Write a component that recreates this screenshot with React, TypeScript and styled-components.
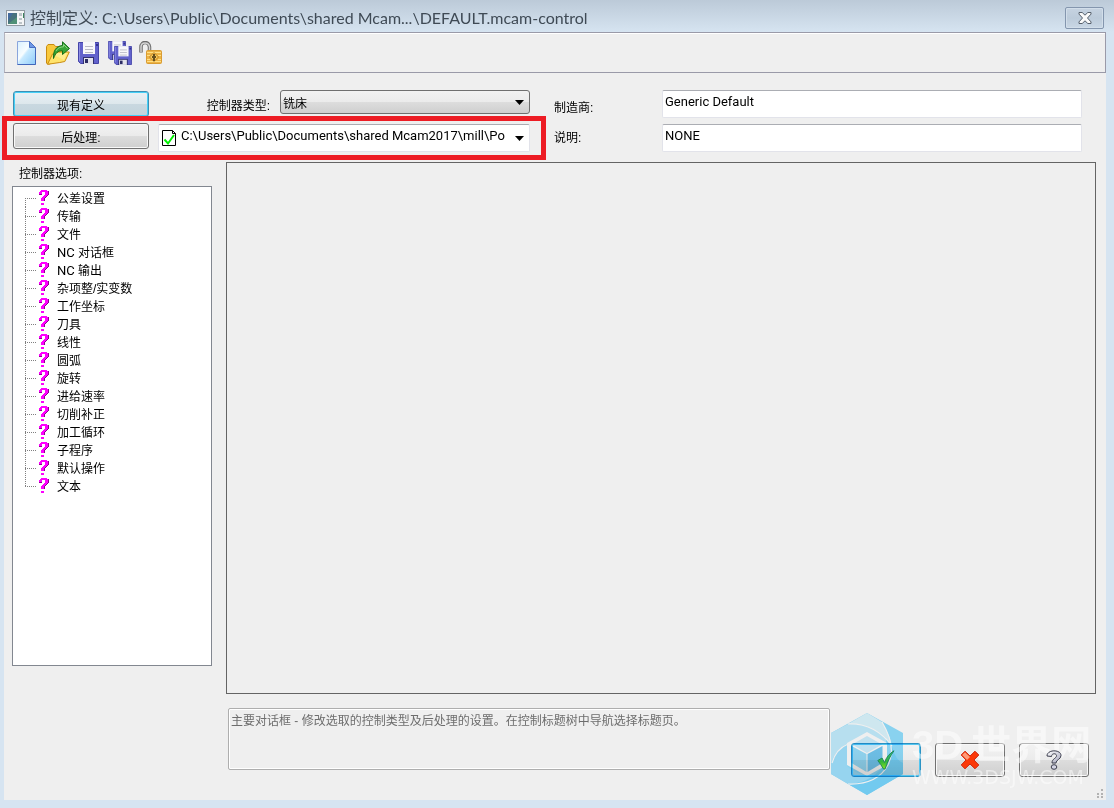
import React from 'react';
import styled, { createGlobalStyle } from 'styled-components';

const GlobalStyle = createGlobalStyle`
  * { box-sizing: border-box; }
  body {
    margin: 0;
    background: #d6e4f1;
    color: #000;
    font: 12px/18px "Liberation Sans", "Noto Sans CJK SC", sans-serif;
  }
  button, input, select, textarea { font: inherit; color: inherit; margin: 0; }
`;

const Window = styled.div`
  display: flex;
  flex-direction: column;
  min-height: 100vh;
  padding: 0 8px 8px 4px;
  background: linear-gradient(#bccad8, #d6e4f1 32px);
`;

const TitleBar = styled.header`
  display: flex;
  align-items: center;
  gap: 5px;
  height: 32px;
  padding: 4px 2px 0;
`;

const Title = styled.h1`
  flex: 1;
  margin: 0;
  font: 400 16px/24px Lato, "Noto Sans CJK SC", sans-serif;
  color: #3f4a55;
  white-space: nowrap;
`;

const CloseButton = styled.button`
  display: grid;
  place-items: center;
  width: 39px;
  height: 22px;
  padding: 0;
  border: 1px solid #8496ae;
  border-radius: 2px;
  background: linear-gradient(#c6d3e1, #bccbda 50%, #c9d7e5);
  box-shadow: inset 0 0 0 1px #d2deea;
`;

const Client = styled.main`
  position: relative;
  flex: 1;
  background: #efefef;
`;

const Toolbar = styled.div`
  display: flex;
  align-items: center;
  gap: 7px;
  height: 41px;
  padding: 0 10px;
  border: 1px solid #9a9aa8;
  border-left-color: #b4b4be;
  box-shadow: inset 0 1px #fff;
`;

const ToolButton = styled.button`
  width: 24px;
  height: 24px;
  padding: 0;
  border: 0;
  background: none;
  svg { display: block; }
`;

const Definition = styled.section`
  position: relative;
  display: flex;
  padding: 17px 24px 9px 9px;
`;

const ButtonColumn = styled.div`
  display: flex;
  flex-direction: column;
  gap: 6px;
  width: 136px;
  padding-top: 1px;
  margin-right: 9px;
`;

const PushButton = styled.button<{ $active?: boolean }>`
  display: grid;
  place-items: center;
  height: 26px;
  padding: 4px 0 0;
  border: 1px solid ${(p) => (p.$active ? '#3c8fb4' : '#707070')};
  border-radius: 3px;
  background: ${(p) =>
    p.$active
      ? 'linear-gradient(#e9f0f4, #dde7ec 50%, #c9d8e0 50%, #c3d3dc)'
      : 'linear-gradient(#f2f2f2, #ebebeb 50%, #dddddd 50%, #cfcfcf)'};
  box-shadow: inset 0 0 0 1px ${(p) => (p.$active ? '#46d0f7' : '#f8f8f8')};
`;

const FieldColumn = styled.div`
  display: flex;
  flex-direction: column;
  gap: 6px;
  width: 372px;
  margin-right: 24px;
`;

const FieldRow = styled.div`
  display: flex;
  gap: 10px;
  justify-content: flex-end;
  height: 28px;
  line-height: 32px;
`;

const TypeSelect = styled.select`
  appearance: none;
  width: 250px;
  height: 24px;
  padding: 4px 24px 0 2px;
  border: 1px solid #707070;
  border-radius: 3px;
  background: linear-gradient(#f2f2f2, #ebebeb 50%, #dddddd 50%, #cfcfcf);
`;

const SelectBox = styled.div<{ $wide?: boolean }>`
  position: relative;
  width: ${(p) => (p.$wide ? '100%' : '250px')};
  line-height: 18px;
`;

const ArrowMark = styled.svg<{ $low?: boolean }>`
  position: absolute;
  right: 6px;
  top: ${(p) => (p.$low ? '12px' : '10px')};
  pointer-events: none;
`;

const PageMark = styled.svg`
  position: absolute;
  left: 4px;
  top: 6px;
  pointer-events: none;
`;

const PostSelect = styled.select`
  appearance: none;
  width: 100%;
  height: 28px;
  padding: 0 24px 4px 22px;
  border: 1px solid #e2e3ea;
  border-top-color: #abadb3;
  border-radius: 2px;
  background: #fff;
  font-family: Roboto, "Noto Sans CJK SC", sans-serif;
  font-size: 13px;
`;

const LabelColumn = styled.div`
  display: flex;
  flex-direction: column;
  width: 108px;
  padding-top: 3px;
  line-height: 30px;
`;

const InputColumn = styled.div`
  display: flex;
  flex: 1;
  flex-direction: column;
  gap: 6px;
`;

const TextInput = styled.input`
  width: 100%;
  height: 28px;
  padding: 0 2px 5px;
  border: 1px solid #e2e3ea;
  border-top-color: #abadb3;
  border-radius: 2px;
  background: #fff;
  font-family: Roboto, "Noto Sans CJK SC", sans-serif;
  font-size: 13px;
`;

const Highlight = styled.div`
  position: absolute;
  left: -2px;
  top: 43px;
  width: 544px;
  height: 44px;
  border: 5px solid #ed1c24;
  pointer-events: none;
`;

const Workspace = styled.section`
  display: flex;
  gap: 14px;
  padding: 0 10px 0 8px;
`;

const OptionsPane = styled.div`
  width: 200px;
`;

const PaneTitle = styled.h2`
  margin: 0;
  padding-left: 7px;
  font: inherit;
  line-height: 24px;
`;

const Tree = styled.ul`
  min-height: 480px;
  margin: 0;
  padding: 2px 12px;
  list-style: none;
  border: 1px solid #828790;
  background: #fff;
`;

const TreeItem = styled.li`
  display: flex;
  align-items: center;
  height: 18px;
`;

const Branch = styled.span<{ $first: boolean; $last: boolean }>`
  width: 13px;
  height: 18px;
  background:
    repeating-linear-gradient(to right, #808080 0 1px, transparent 1px 2px) 0 9px / 11px 1px no-repeat,
    repeating-linear-gradient(to bottom, #808080 0 1px, transparent 1px 2px)
      0 ${(p) => (p.$first ? '9px' : '0')} / 1px ${(p) => (p.$first || p.$last ? '9px' : '18px')} no-repeat;
`;

const TreeLabel = styled.span`
  padding: 2px 0 0 8px;
  line-height: 18px;
  white-space: nowrap;
`;

const Latin = styled.span`
  font-family: Roboto, sans-serif;
  font-size: 13px;
  line-height: 1;
`;

const PagePanel = styled.div`
  flex: 1;
  min-height: 532px;
  border: 1px solid #646464;
`;

const Footer = styled.footer`
  display: flex;
  align-items: flex-end;
  gap: 14px;
  padding: 14px 17px 23px 224px;
`;

const Description = styled.textarea`
  display: block;
  flex: 1;
  align-self: flex-start;
  height: 62px;
  margin-right: 7px;
  padding: 3px 2px 2px;
  border: 1px solid #aeaeae;
  border-radius: 2px;
  box-shadow: inset 0 0 0 1px #fff;
  background: #efefef;
  color: #6d6d6d;
  resize: none;
  overflow: hidden;
`;

const ActionButton = styled.button<{ $active?: boolean }>`
  display: grid;
  place-items: center;
  width: 70px;
  height: 34px;
  margin-top: 35px;
  padding: 0;
  border: 1px solid ${(p) => (p.$active ? '#2a93c4' : '#707070')};
  border-radius: 3px;
  background: linear-gradient(#f2f2f2, #ebebeb 50%, #dddddd 50%, #cfcfcf);
  box-shadow: inset 0 0 0 1px ${(p) => (p.$active ? '#55c6f0' : '#f8f8f8')};
  svg { z-index: 1; }
`;

const Watermark = styled.div`
  position: absolute;
  right: 16px;
  bottom: 5px;
  display: flex;
  gap: 9px;
  width: 259px;
  height: 82px;
  pointer-events: none;
`;

const HexDrawing = styled.svg`
  flex: none;
  mix-blend-mode: multiply;
`;

const WatermarkText = styled.div`
  padding-top: 8px;
  color: rgba(255, 255, 255, 0.5);
  font: 700 40px/48px "Liberation Sans", "Noto Sans CJK SC", sans-serif;
  white-space: nowrap;
`;

const WatermarkName = styled.div`
  display: flex;
  gap: 8px;
`;

const WatermarkSite = styled.div`
  font: 400 19px/16px "DejaVu Sans", sans-serif;
`;

const Grip = styled.svg`
  position: absolute;
  right: 2px;
  bottom: 2px;
`;

const AppIcon = () => (
  <svg width="19" height="16" viewBox="0 0 19 16" aria-hidden="true">
    <rect x=".5" y=".5" width="18" height="15" fill="#f4f6f7" stroke="#929ba3" />
    <rect x="2" y="3" width="9" height="11" fill="#47727d" />
    <path d="M2 3h5L2 11z" fill="#436a9c" />
    <path d="M2 14l9-7v7z" fill="#509177" />
    <path d="M13 3h3v3h-3zM13 8h3v2h-3zM13 12h3v2h-3z" fill="#bcc4c8" />
    <path d="M17 3h1v5h-1z" fill="#39805c" />
  </svg>
);

const CloseIcon = () => (
  <svg width="14" height="12" viewBox="0 0 14 12" aria-hidden="true">
    <path
      d="M1 .5h3.2L7 3.2 9.800.5H13v1.600L9.500 6l3.500 3.900v1.600H9.800L7 8.800l-2.800 2.700H1V9.900L4.500 6 1 2.100z"
      fill="#fafafa"
      stroke="#56606c"
      strokeLinejoin="round"
    />
  </svg>
);

const NewIcon = () => (
  <svg width="24" height="24" viewBox="0 0 24 24" aria-hidden="true">
    <defs>
      <linearGradient id="sheet" x1="0" y1="0" x2="1" y2="1">
        <stop offset="0" stopColor="#d8f0ff" />
        <stop offset=".42" stopColor="#f8fdff" />
        <stop offset=".5" stopColor="#c8eaff" />
        <stop offset="1" stopColor="#8ecbfa" />
      </linearGradient>
    </defs>
    <path d="M2.500.5h12l6 6v17h-18z" fill="url(#sheet)" stroke="#8aa5dc" />
    <path d="M20.500 6.500v17h-18" fill="none" stroke="#4267bb" />
    <path d="M14.500.5v6h6z" fill="#6f98e5" stroke="#4a70c4" strokeLinejoin="round" />
  </svg>
);

const OpenIcon = () => (
  <svg width="24" height="24" viewBox="0 0 24 24" aria-hidden="true">
    <path d="M.5 22V5.500L2 3.500h6l1.500 2H18V11L4 23H1.500z" fill="#f9c83c" stroke="#c98b10" />
    <path d="M1.500 23.300L6.500 13 12 11h11.300l-4.500 9.500-5 1z" fill="#ffe36b" stroke="#c98b10" strokeLinejoin="round" />
    <path d="M8 14l4-2h9l-3 7z" fill="#fff19c" opacity=".7" />
    <path
      d="M7.500 17.500C7 10 10 5 16.500 4.500V.8L23.500 7.500l-7 6V9.800C12 9.500 9.500 12 7.500 17.500z"
      fill="#36a536"
      stroke="#157018"
      strokeLinejoin="round"
    />
    <path d="M10 10c1.500-3 4-4 7.500-4.200V3.500l4 4" fill="none" stroke="#8ad67f" />
  </svg>
);

const FloppyShape = () => (
  <>
    <path d="M.5.5h20v21h-18l-2-2z" fill="#6262cc" stroke="#4444a8" />
    <path d="M1.500 1v18" stroke="#8e8ee4" />
    <path d="M5 0h12v12H5z" fill="#f7f7fa" />
    <path d="M7 4.500h8M7 7.500h8M7 10.500h8" stroke="#b9b9c4" />
    <path d="M5 15h11v7H5z" fill="#303070" />
    <path d="M6 16h9v6H6z" fill="#e4e4ec" />
    <path d="M7 17h3v4H7z" fill="#2c2c64" />
    <path d="M18 2h2v2h-2z" fill="#34348d" />
  </>
);

const SaveIcon = () => (
  <svg width="24" height="24" viewBox="0 0 24 24" aria-hidden="true">
    <g transform="translate(1 1)"><FloppyShape /></g>
  </svg>
);

const SaveAllIcon = () => (
  <svg width="24" height="24" viewBox="0 0 24 24" aria-hidden="true">
    <svg width="18" height="19" viewBox="0 0 21 22"><FloppyShape /></svg>
    <svg x="6" y="5" width="18" height="19" viewBox="0 0 21 22"><FloppyShape /></svg>
  </svg>
);

const UnlockIcon = () => (
  <svg width="24" height="24" viewBox="0 0 24 24" aria-hidden="true">
    <path d="M2 11.500V6c0-6 8-6 8.500 0v6" fill="none" stroke="#6d6d6d" strokeWidth="3.500" />
    <path d="M2 11V6c0-5.500 8-5.500 8.500 0v5" fill="none" stroke="#d4d4d4" strokeWidth="1.500" />
    <rect x="7.500" y="9.500" width="15" height="13" rx="1" fill="#eeb344" stroke="#d99c32" />
    <path d="M8 11.500h14M8 14.500h3m8 0h3M8 18.500h3m8 0h3M8 20.500h14" stroke="#ffdf83" />
    <path d="M15 11.500l4.500 4.500-4.500 4.500-4.500-4.500z" fill="#f9ca59" stroke="#bb8126" />
    <path d="M14 13h2v2h1v2h-1v3h-2v-3h-1v-2h1z" fill="#68501e" />
  </svg>
);

const QuestionIcon = () => (
  <svg width="11" height="16" viewBox="0 0 11 16" shapeRendering="crispEdges" aria-hidden="true">
    <path d="M9 1h2v4h-1v1H9v1H8v1H7v3H6V8h1V7h1V6h1zM5 13h1v2H5zM1 4h3v1H1z" fill="#900090" />
    <path d="M3 0h6v1h1v4H9v1H8v1H7v1H6v3H3V8h1V7h1V6h1V5h1V2H4v2H1V2h1V1h1zM3 13h3v2H3z" fill="#f0f" />
  </svg>
);

const Arrow = ({ low }: { low?: boolean }) => (
  <ArrowMark $low={low} width="9" height="5" viewBox="0 0 9 5" aria-hidden="true">
    <path d="M0 0h9L4.500 5z" fill="#000" />
  </ArrowMark>
);

const HexLogo = () => (
  <HexDrawing width="72" height="82" viewBox="0 0 72 82" aria-hidden="true">
    <path d="M36 0L72 20V61L36 82 0 61V20z" fill="#92e0ff" />
    <path d="M36 0L51 9Q58 20 61 33 46 11 17 11z" fill="#dcf7ff" />
    <path d="M0 20L17 11Q42 11 55 25V32L36 20 16 31Q5 36 1 50L0 50z" fill="#c3eeff" />
    <path d="M0 50Q5 36 16 31V53Q26 63 42 62 32 72 17 71L0 61z" fill="#a0e3ff" />
    <path d="M17 71Q50 70 61 34 65 48 72 50V61L36 82z" fill="#7ad8ff" />
    <path
      d="M17 11Q44 10 61 33M51 9Q66 34 57 52 46 72 17 71M1 50Q5 36 17 31"
      fill="none"
      stroke="#fff"
      strokeWidth="1.200"
    />
    <path d="M36 19L56 30V52L36 63 16 52V30z" fill="#fff" />
    <path d="M36 23L51 31.500 36 40 21 31.500z" fill="#cdf0ff" />
    <path d="M20.500 33L35.500 41V59L20.500 50z" fill="#98dffc" />
    <path d="M51.500 33L36.500 41V59L51.500 50z" fill="#74caf4" />
  </HexDrawing>
);

const CheckIcon = () => (
  <svg width="18" height="20" viewBox="0 0 18 20" aria-hidden="true">
    <defs>
      <linearGradient id="tick" x1="0" y1="0" x2="0" y2="1">
        <stop offset="0" stopColor="#2fbf86" />
        <stop offset=".6" stopColor="#35b53c" />
        <stop offset="1" stopColor="#86e61e" />
      </linearGradient>
    </defs>
    <path d="M.8 10.500L5 8l2.500 4.500C9.500 7 12.500 3.500 17 .8 13 6 11 11 8 19H6.500C5 16 3 13.500.8 10.500z" fill="url(#tick)" stroke="#1f8a58" strokeLinejoin="round" />
  </svg>
);

const CancelIcon = () => (
  <svg width="20" height="20" viewBox="0 0 20 20" aria-hidden="true">
    <path d="M5 1.200L10 6l5-4.800L18.800 5 14 10l4.800 5L15 18.800 10 14l-5 4.800L1.200 15 6 10 1.200 5z" fill="#fb3808" stroke="#cf2a10" strokeLinejoin="round" />
    <path d="M5 2.200L10 7l-3 3L2.200 5z" fill="#ff9b78" />
  </svg>
);

const HelpIcon = () => (
  <svg width="16" height="20" viewBox="0 0 16 20" aria-hidden="true">
    <defs>
      <linearGradient id="chrome" x1="0" y1="0" x2="1" y2="1">
        <stop offset="0" stopColor="#ffffff" />
        <stop offset="1" stopColor="#a4a6bc" />
      </linearGradient>
    </defs>
    <path d="M1 6C1-.8 15-.8 15 5.500c0 4-5 4-5 7.500H6c0-4.500 4.500-4.500 4.500-7.300C10.500 3 5.500 3 5.500 6.500z" fill="url(#chrome)" stroke="#3c3e4e" strokeLinejoin="round" />
    <ellipse cx="8" cy="17" rx="2.800" ry="2.300" fill="#d4d4e4" stroke="#3c3e4e" />
  </svg>
);

const tools = [
  { name: '新建', Icon: NewIcon },
  { name: '打开', Icon: OpenIcon },
  { name: '保存', Icon: SaveIcon },
  { name: '另存为', Icon: SaveAllIcon },
  { name: '解锁', Icon: UnlockIcon },
];

const options: { latin?: string; text: string }[] = [
  { text: '公差设置' },
  { text: '传输' },
  { text: '文件' },
  { latin: 'NC ', text: '对话框' },
  { latin: 'NC ', text: '输出' },
  { text: '杂项整/实变数' },
  { text: '工作坐标' },
  { text: '刀具' },
  { text: '线性' },
  { text: '圆弧' },
  { text: '旋转' },
  { text: '进给速率' },
  { text: '切削补正' },
  { text: '加工循环' },
  { text: '子程序' },
  { text: '默认操作' },
  { text: '文本' },
];

export default function App() {
  return (
    <Window>
      <GlobalStyle />
      <TitleBar>
        <AppIcon />
        <Title>控制定义: C:\Users\Public\Documents\shared Mcam...\DEFAULT.mcam-control</Title>
        <CloseButton type="button" aria-label="关闭"><CloseIcon /></CloseButton>
      </TitleBar>
      <Client>
        <Toolbar role="toolbar">
          {tools.map(({ name, Icon }) => (
            <ToolButton key={name} type="button" aria-label={name}><Icon /></ToolButton>
          ))}
        </Toolbar>

        <Definition>
          <ButtonColumn>
            <PushButton type="button" $active>现有定义</PushButton>
            <PushButton type="button">后处理:</PushButton>
          </ButtonColumn>
          <FieldColumn>
            <FieldRow>
              <label htmlFor="controller-type">控制器类型:</label>
              <SelectBox>
                <TypeSelect id="controller-type"><option>铣床</option></TypeSelect>
                <Arrow />
              </SelectBox>
            </FieldRow>
            <SelectBox $wide>
              <PostSelect aria-label="后处理">
                <option>C:\Users\Public\Documents\shared Mcam2017\mill\Po</option>
              </PostSelect>
              <PageMark width="14" height="16" viewBox="0 0 14 16" aria-hidden="true">
                <path d="M.5.5h10l3 3v12H.5z" fill="#fff" stroke="#000" />
                <path d="M10.500.5v3h3" fill="none" stroke="#000" />
                <path d="M2.500 9.500l3.500 4L12 5" fill="none" stroke="#00f000" strokeWidth="2" />
              </PageMark>
              <Arrow low />
            </SelectBox>
          </FieldColumn>
          <LabelColumn>
            <label htmlFor="maker">制造商:</label>
            <label htmlFor="note">说明:</label>
          </LabelColumn>
          <InputColumn>
            <TextInput id="maker" defaultValue="Generic Default" />
            <TextInput id="note" defaultValue="NONE" />
          </InputColumn>
          <Highlight />
        </Definition>

        <Workspace>
          <OptionsPane>
            <PaneTitle>控制器选项:</PaneTitle>
            <Tree>
              {options.map(({ latin, text }, i) => (
                <TreeItem key={text}>
                  <Branch $first={i === 0} $last={i === options.length - 1} />
                  <QuestionIcon />
                  <TreeLabel>{latin && <Latin>{latin}</Latin>}{text}</TreeLabel>
                </TreeItem>
              ))}
            </Tree>
          </OptionsPane>
          <PagePanel />
        </Workspace>

        <Footer>
          <Description
            readOnly
            aria-label="说明文字"
            value="主要对话框 - 修改选取的控制类型及后处理的设置。在控制标题树中导航选择标题页。"
          />
          <ActionButton type="button" $active aria-label="确定"><CheckIcon /></ActionButton>
          <ActionButton type="button" aria-label="取消"><CancelIcon /></ActionButton>
          <ActionButton type="button" aria-label="帮助"><HelpIcon /></ActionButton>
        </Footer>

        <Watermark>
          <HexLogo />
          <WatermarkText>
            <WatermarkName><span>3D</span><span>世界网</span></WatermarkName>
            <WatermarkSite>WWW.3DSJW.COM</WatermarkSite>
          </WatermarkText>
        </Watermark>
        <Grip width="8" height="9" viewBox="0 0 8 9" aria-hidden="true">
          <path d="M5 0h2v2H5zM5 4h2v2H5zM5 7h2v2H5zM1 4h2v2H1zM1 7h2v2H1z" fill="#b2b2b2" />
        </Grip>
      </Client>
    </Window>
  );
}
